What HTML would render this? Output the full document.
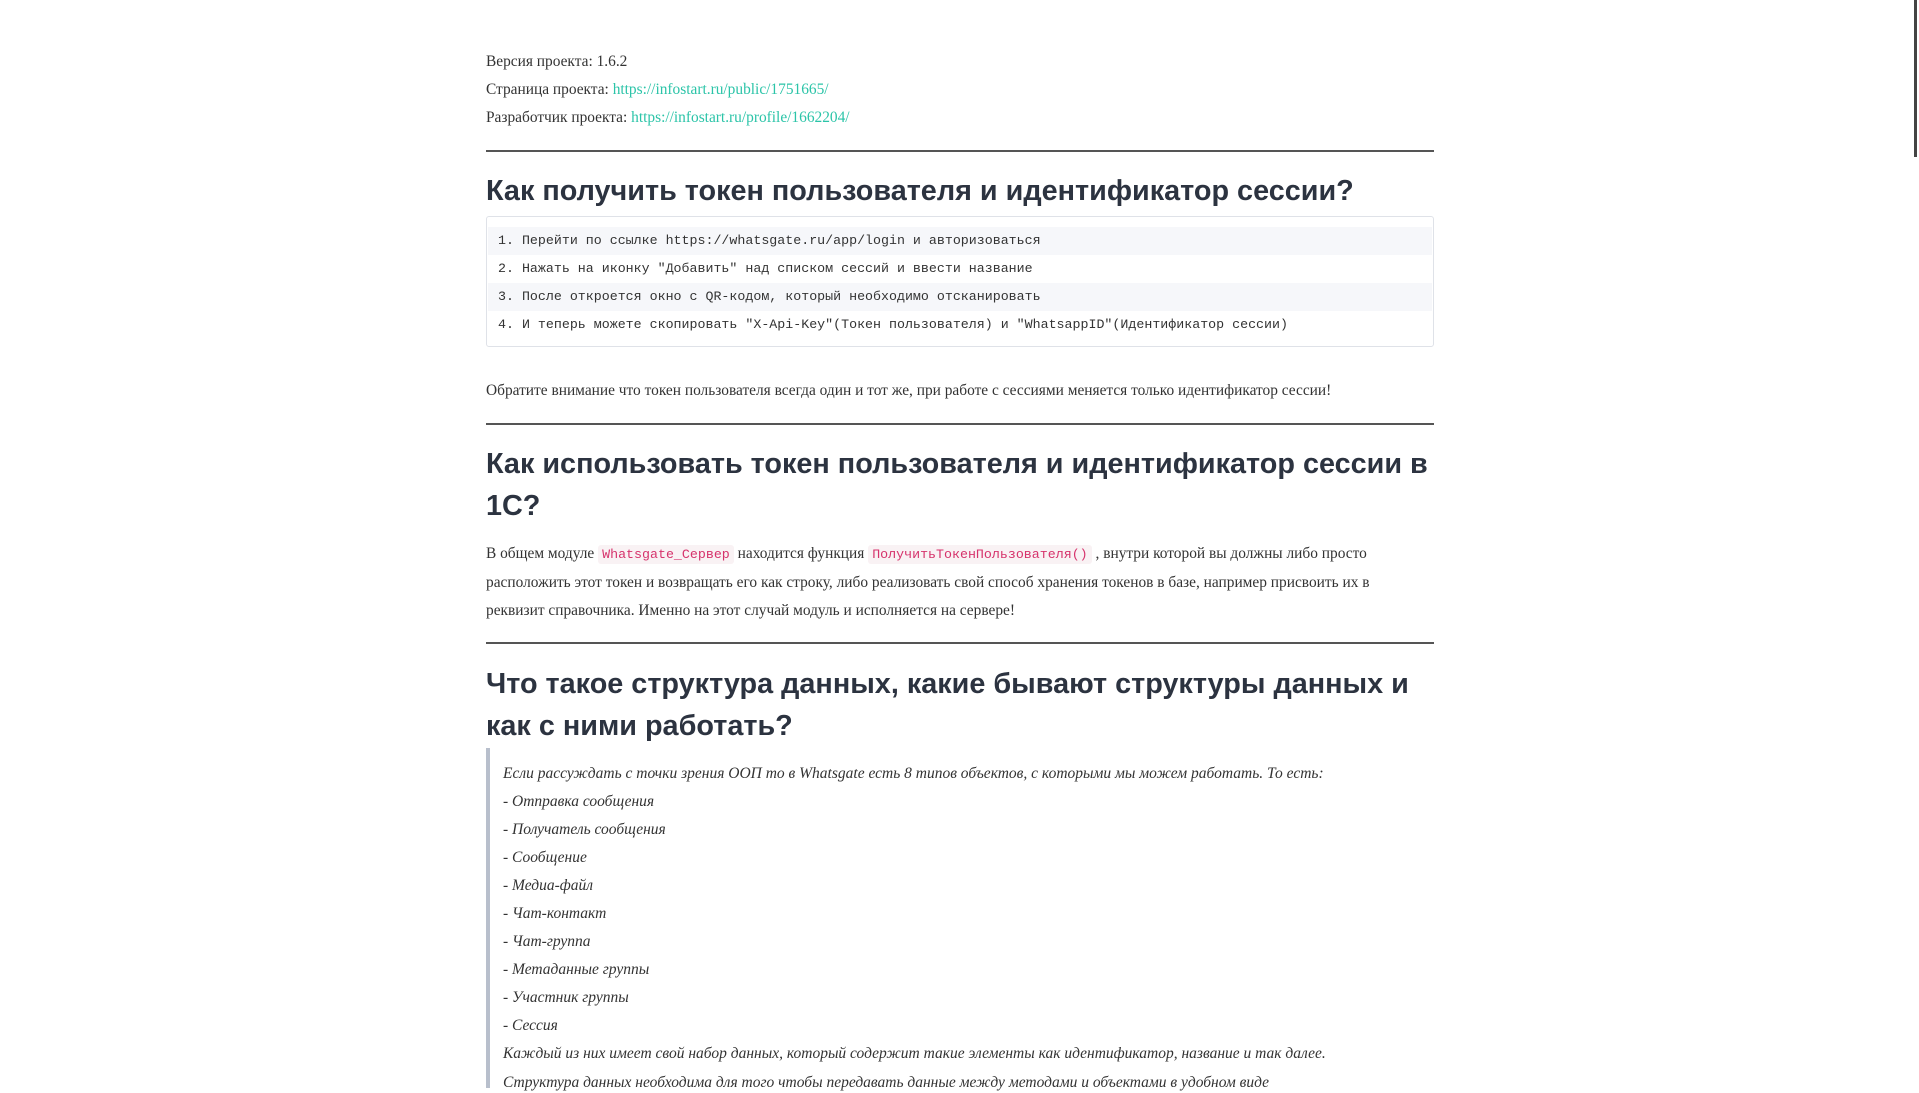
<!DOCTYPE html>
<html><head><meta charset="utf-8"><style>
*{margin:0;padding:0;box-sizing:border-box}
body{width:1919px;height:1079px;overflow:hidden;background:#fff;font-family:"Liberation Serif","DejaVu Serif",serif;color:#333;font-size:15.4px;position:relative}
.p{position:absolute;left:486px;white-space:nowrap;line-height:20px}
a{color:#2bc4a8;text-decoration:none}
hr{position:absolute;left:486px;width:948px;border:0;border-top:2px solid #555;height:0}
h{position:absolute;left:486px;font-family:"Liberation Sans",sans-serif;font-weight:bold;font-size:28.8px;color:#2c3340;line-height:41px;white-space:nowrap}
.code{position:absolute;left:486px;top:216px;width:948px;height:131px;border:1px solid #dfe2e8;border-radius:3px;background:#fff}
.row{position:absolute;left:1px;right:1px;height:28px;font-family:"Liberation Mono",monospace;font-size:13.3px;color:#333;padding-left:10px;line-height:28px;white-space:pre}
.g{background:#f6f7fa}
code{font-family:"Liberation Mono",monospace;color:#d6336c;background:#f9f2f4;padding:2px 4px;border-radius:3px;font-size:13.3px}
.bq{position:absolute;left:486px;top:748px;width:4px;height:340px;background:#b8bfcc}
i{font-style:italic}
.q{left:503px;font-size:15.5px}
</style></head><body>
<div class="p" style="top:52px">Версия проекта: 1.6.2</div>
<div class="p" style="top:80px">Страница проекта: <a>https://infostart.ru/public/1751665/</a></div>
<div class="p" style="top:108px">Разработчик проекта: <a>https://infostart.ru/profile/1662204/</a></div>
<hr style="top:150px">
<h style="top:171px">Как получить токен пользователя и идентификатор сессии?</h>
<div class="code">
<div class="row g" style="top:10px">1. Перейти по ссылке https://whatsgate.ru/app/login и авторизоваться</div>
<div class="row" style="top:38px">2. Нажать на иконку "Добавить" над списком сессий и ввести название</div>
<div class="row g" style="top:66px">3. После откроется окно с QR-кодом, который необходимо отсканировать</div>
<div class="row" style="top:94px">4. И теперь можете скопировать "X-Api-Key"(Токен пользователя) и "WhatsappID"(Идентификатор сессии)</div>
</div>
<div class="p" style="top:381px">Обратите внимание что токен пользователя всегда один и тот же, при работе с сессиями меняется только идентификатор сессии!</div>
<hr style="top:423px">
<h style="top:444px">Как использовать токен пользователя и идентификатор сессии в</h>
<h style="top:486px">1С?</h>
<div class="p" style="top:544px">В общем модуле <code>Whatsgate_Сервер</code> находится функция <code>ПолучитьТокенПользователя()</code> , внутри которой вы должны либо просто</div>
<div class="p" style="top:573px">расположить этот токен и возвращать его как строку, либо реализовать свой способ хранения токенов в базе, например присвоить их в</div>
<div class="p" style="top:601px">реквизит справочника. Именно на этот случай модуль и исполняется на сервере!</div>
<hr style="top:642px">
<h style="top:664px">Что такое структура данных, какие бывают структуры данных и</h>
<h style="top:706px">как с ними работать?</h>
<div class="bq"></div>
<div class="p q" style="top:764px"><i>Если рассуждать с точки зрения ООП то в Whatsgate есть 8 типов объектов, с которыми мы можем работать. То есть:</i></div>
<div class="p q" style="top:792px"><i>- Отправка сообщения</i></div>
<div class="p q" style="top:820px"><i>- Получатель сообщения</i></div>
<div class="p q" style="top:848px"><i>- Сообщение</i></div>
<div class="p q" style="top:876px"><i>- Медиа-файл</i></div>
<div class="p q" style="top:904px"><i>- Чат-контакт</i></div>
<div class="p q" style="top:932px"><i>- Чат-группа</i></div>
<div class="p q" style="top:960px"><i>- Метаданные группы</i></div>
<div class="p q" style="top:988px"><i>- Участник группы</i></div>
<div class="p q" style="top:1016px"><i>- Сессия</i></div>
<div class="p q" style="top:1044px"><i>Каждый из них имеет свой набор данных, который содержит такие элементы как идентификатор, название и так далее.</i></div>
<div class="p q" style="top:1073px"><i>Структура данных необходима для того чтобы передавать данные между методами и объектами в удобном виде</i></div>
<div style="position:absolute;left:1914px;top:0;width:3px;height:157px;background:#444"></div>
</body></html>
